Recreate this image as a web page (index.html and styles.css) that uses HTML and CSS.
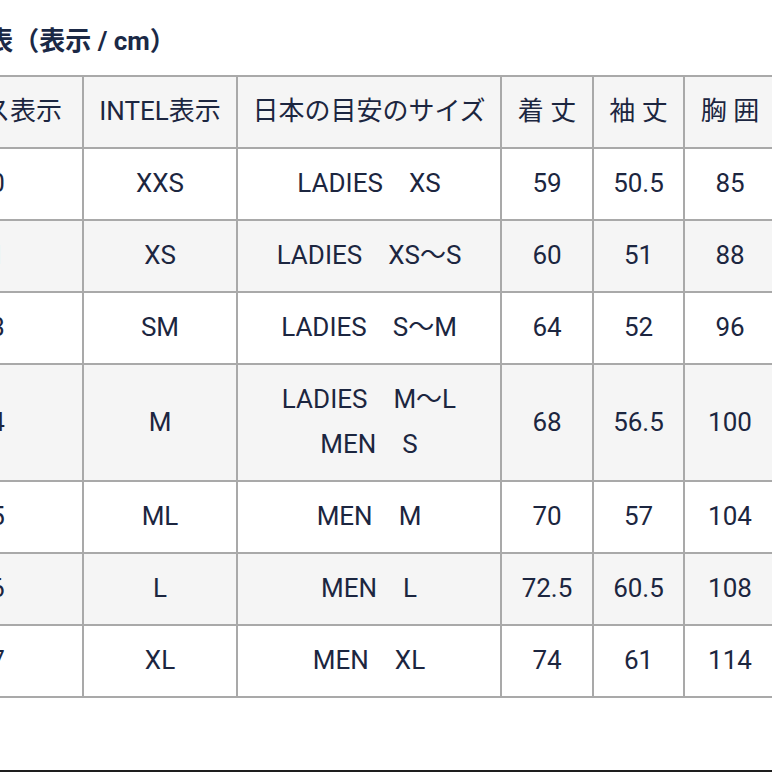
FILE: index.html
```html
<!DOCTYPE html>
<html lang="ja">
<head>
<meta charset="utf-8">
<title>サイズ表</title>
<link rel="stylesheet" href="styles.css">
</head>
<body>
<div class="page">
  <h2 class="title">サイズ表（表示 / cm）</h2>
  <table class="size-table">
    <colgroup>
      <col class="c0"><col class="c1"><col class="c2"><col class="c3"><col class="c4"><col class="c5">
    </colgroup>
    <thead>
      <tr><th>スイス表示</th><th>INTEL表示</th><th>日本の目安のサイズ</th><th>着 丈</th><th>袖 丈</th><th>胸 囲</th></tr>
    </thead>
    <tbody>
      <tr><td>0</td><td>XXS</td><td>LADIES　XS</td><td>59</td><td>50.5</td><td>85</td></tr>
      <tr><td>1</td><td>XS</td><td>LADIES　XS〜S</td><td>60</td><td>51</td><td>88</td></tr>
      <tr><td>3</td><td>SM</td><td>LADIES　S〜M</td><td>64</td><td>52</td><td>96</td></tr>
      <tr><td>4</td><td>M</td><td>LADIES　M〜L<br>MEN　S</td><td>68</td><td>56.5</td><td>100</td></tr>
      <tr><td>5</td><td>ML</td><td>MEN　M</td><td>70</td><td>57</td><td>104</td></tr>
      <tr><td>6</td><td>L</td><td>MEN　L</td><td>72.5</td><td>60.5</td><td>108</td></tr>
      <tr><td>7</td><td>XL</td><td>MEN　XL</td><td>74</td><td>61</td><td>114</td></tr>
    </tbody>
  </table>
</div>
</body>
</html>
```
FILE: styles.css
```css
html, body {
  margin: 0;
  padding: 0;
  background: #ffffff;
}
.page {
  width: 772px;
  height: 770px;
  overflow: hidden;
  border-bottom: 2px solid #1e1e1e;
  font-family: Roboto, "Noto Sans CJK JP", sans-serif;
  color: #1c2640;
}
.title {
  margin: 25px 0 0 -90px;
  font-size: 26px;
  line-height: 32px;
  font-weight: 700;
  color: #1b2946;
  white-space: nowrap;
}
.size-table {
  margin: 18px 0 0 -89px;
  border-collapse: collapse;
  table-layout: fixed;
  width: 864px;
  font-size: 26px;
}
.c0 { width: 171px; }
.c1 { width: 154px; }
.c2 { width: 264px; }
.c3 { width: 92px; }
.c4 { width: 91px; }
.c5 { width: 92px; }
.size-table th,
.size-table td {
  border: 2px solid #a9a9a9;
  padding: 12px 0 13px;
  line-height: 45px;
  text-align: center;
  font-weight: 400;
  white-space: nowrap;
}
.size-table thead tr {
  background: #f5f5f5;
}
.size-table tbody tr:nth-child(even) {
  background: #f5f5f5;
}
.size-table tbody tr:nth-child(odd) {
  background: #ffffff;
}
```
